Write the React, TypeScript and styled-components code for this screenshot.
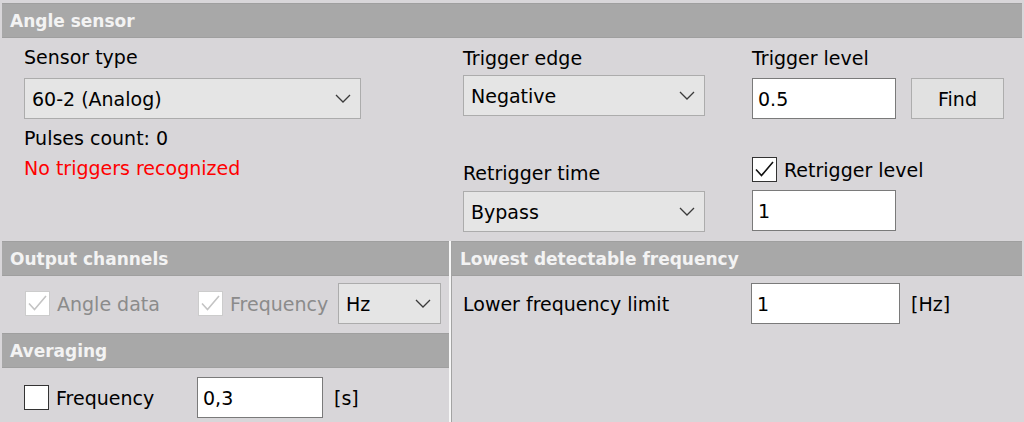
import React from 'react';
import styled, { createGlobalStyle } from 'styled-components';

const GlobalStyle = createGlobalStyle`
  html, body {
    margin: 0;
    padding: 0;
    background: #d8d6d9;
  }
  body {
    font-family: "DejaVu Sans", sans-serif;
    font-size: 19px;
    color: #000;
  }
`;

const Page = styled.div`
  width: 1024px;
  height: 422px;
  overflow: hidden;
  padding: 3px 2px 0 2px;
  box-sizing: border-box;
  display: flex;
  flex-direction: column;
`;

const SectionHeader = styled.div`
  height: 35px;
  box-sizing: border-box;
  background: #a8a8a8;
  border-top: 1px solid #9f9f9f;
  border-bottom: 1px solid #9f9f9f;
  color: #f3f3f3;
  font-weight: bold;
  font-size: 17px;
  line-height: 31px;
  padding: 2px 0 0 8px;
  white-space: nowrap;
`;

const TopBody = styled.div`
  display: flex;
  height: 203px;
  padding-left: 22px;
`;

const Column = styled.div<{ $width: number; $left?: number; $top: number }>`
  display: flex;
  flex-direction: column;
  width: ${(p) => p.$width}px;
  margin-left: ${(p) => p.$left ?? 0}px;
  padding-top: ${(p) => p.$top}px;
`;

const Label = styled.div<{ $gap?: number; $color?: string; $width?: number }>`
  height: 22px;
  line-height: 22px;
  white-space: nowrap;
  margin-top: ${(p) => p.$gap ?? 0}px;
  color: ${(p) => p.$color ?? '#000'};
  width: ${(p) => (p.$width ? `${p.$width}px` : 'auto')};
  flex-shrink: 0;
`;

const Select = styled.div<{ $width?: number; $gap?: number }>`
  box-sizing: border-box;
  height: 41px;
  width: ${(p) => (p.$width ? `${p.$width}px` : '100%')};
  margin-top: ${(p) => p.$gap ?? 0}px;
  background: #e5e5e5;
  border: 1px solid #acacac;
  display: flex;
  align-items: center;
  justify-content: space-between;
  padding: 0 9px 0 7px;
  flex-shrink: 0;
`;

const Input = styled.div<{ $width: number; $gap?: number }>`
  box-sizing: border-box;
  height: 41px;
  width: ${(p) => p.$width}px;
  margin-top: ${(p) => p.$gap ?? 0}px;
  background: #fff;
  border: 1px solid #7a7a7a;
  display: flex;
  align-items: center;
  padding-left: 5px;
  flex-shrink: 0;
`;

const Button = styled.div`
  box-sizing: border-box;
  height: 41px;
  width: 93px;
  background: #e1e1e1;
  border: 1px solid #adadad;
  display: flex;
  align-items: center;
  justify-content: center;
`;

const Row = styled.div<{ $gap?: number; $top?: number }>`
  display: flex;
  align-items: center;
  gap: ${(p) => p.$gap ?? 0}px;
  margin-top: ${(p) => p.$top ?? 0}px;
`;

const CheckLabel = styled.label<{ $disabled?: boolean; $width?: number }>`
  display: flex;
  align-items: center;
  gap: 7px;
  height: 25px;
  white-space: nowrap;
  color: ${(p) => (p.$disabled ? '#8b8b8b' : '#000')};
  width: ${(p) => (p.$width ? `${p.$width}px` : 'auto')};
  flex-shrink: 0;
`;

const Box = styled.span<{ $disabled?: boolean }>`
  box-sizing: border-box;
  width: 25px;
  height: 25px;
  background: #fff;
  border: 1px solid ${(p) => (p.$disabled ? '#cccccc' : '#333333')};
  display: flex;
  align-items: center;
  justify-content: center;
`;

const Unit = styled.span`
  margin-left: 11px;
  white-space: nowrap;
`;

const Bottom = styled.div`
  display: flex;
  flex: 1;
`;

const LeftPanel = styled.div`
  width: 447px;
  display: flex;
  flex-direction: column;
`;

const Divider = styled.div`
  width: 1px;
  border-left: 2px solid #f7f7f7;
  background: #a3a3a3;
`;

const RightPanel = styled.div`
  flex: 1;
  display: flex;
  flex-direction: column;
`;

const PanelRow = styled.div<{ $top: number; $left: number }>`
  display: flex;
  align-items: center;
  padding: ${(p) => p.$top}px 0 0 ${(p) => p.$left}px;
`;

const Spacer = styled.div<{ $h: number }>`
  height: ${(p) => p.$h}px;
`;

const Chevron = () => (
  <svg width="16" height="9" viewBox="0 0 16 9">
    <polyline points="1,1 8,8 15,1" fill="none" stroke="#3a3a3a" strokeWidth="1.3" />
  </svg>
);

const Check = ({ color }: { color: string }) => (
  <svg width="21" height="19" viewBox="0 0 21 19">
    <polyline points="2,9.5 7.5,15.5 19,2" fill="none" stroke={color} strokeWidth="1.6" />
  </svg>
);

const Checkbox = ({
  label,
  checked,
  disabled,
  width,
}: {
  label: string;
  checked?: boolean;
  disabled?: boolean;
  width?: number;
}) => (
  <CheckLabel $disabled={disabled} $width={width}>
    <Box $disabled={disabled}>{checked && <Check color={disabled ? '#c4c4c4' : '#111'} />}</Box>
    {label}
  </CheckLabel>
);

const App = () => {
  return (
    <>
      <GlobalStyle />
      <Page>
        <SectionHeader>Angle sensor</SectionHeader>
        <TopBody>
          <Column $width={337} $top={8}>
            <Label>Sensor type</Label>
            <Select $gap={10}>
              <span>60-2 (Analog)</span>
              <Chevron />
            </Select>
            <Label $gap={8}>Pulses count: 0</Label>
            <Label $gap={8} $color="#ff0000">
              No triggers recognized
            </Label>
          </Column>

          <Column $width={242} $left={102} $top={9}>
            <Label>Trigger edge</Label>
            <Select $gap={6}>
              <span>Negative</span>
              <Chevron />
            </Select>
            <Label $gap={46}>Retrigger time</Label>
            <Select $gap={7}>
              <span>Bypass</span>
              <Chevron />
            </Select>
          </Column>

          <Column $width={252} $left={47} $top={9}>
            <Label>Trigger level</Label>
            <Row $gap={15} $top={9}>
              <Input $width={144}>0.5</Input>
              <Button>Find</Button>
            </Row>
            <Row $top={38}>
              <Checkbox label="Retrigger level" checked />
            </Row>
            <Input $width={144} $gap={8}>
              1
            </Input>
          </Column>
        </TopBody>

        <Bottom>
          <LeftPanel>
            <SectionHeader>Output channels</SectionHeader>
            <PanelRow $top={7} $left={23}>
              <Checkbox label="Angle data" checked disabled width={173} />
              <Checkbox label="Frequency" checked disabled width={140} />
              <Select $width={103}>
                <span>Hz</span>
                <Chevron />
              </Select>
            </PanelRow>
            <Spacer $h={9} />
            <SectionHeader>Averaging</SectionHeader>
            <PanelRow $top={9} $left={22}>
              <Checkbox label="Frequency" width={173} />
              <Input $width={126}>0,3</Input>
              <Unit>[s]</Unit>
            </PanelRow>
          </LeftPanel>
          <Divider />
          <RightPanel>
            <SectionHeader>Lowest detectable frequency</SectionHeader>
            <PanelRow $top={7} $left={11}>
              <Label $width={288}>Lower frequency limit</Label>
              <Input $width={149}>1</Input>
              <Unit>[Hz]</Unit>
            </PanelRow>
          </RightPanel>
        </Bottom>
      </Page>
    </>
  );
};

export default App;
